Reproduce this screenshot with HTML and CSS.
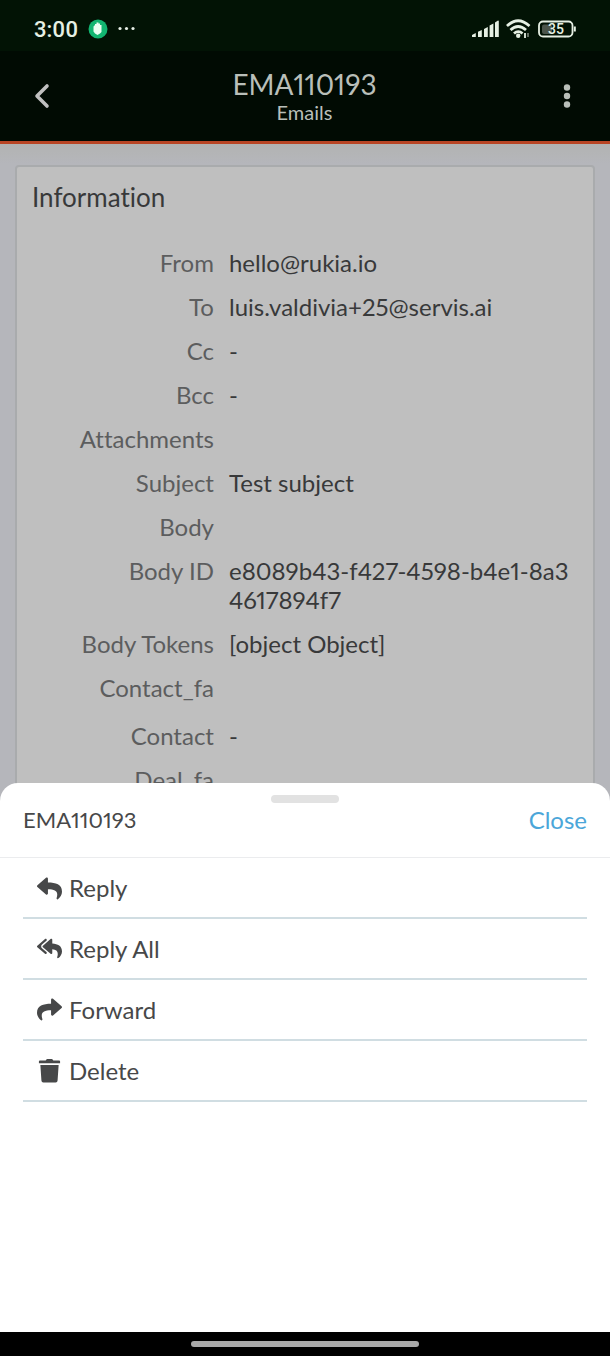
FILE: index.html
```html
<!DOCTYPE html>
<html lang="en">
<head>
    <meta charset="UTF-8">
    <meta name="viewport" content="width=device-width, initial-scale=1.0">
    <title>EMA110193 - Emails</title>
    <link rel="stylesheet" href="styles.css">
</head>
<body>
    <div class="screen">
        <div class="status-bar">
            <div class="status-left">
                <span class="time">3:00</span>
                <svg class="app-badge" width="20" height="20" viewBox="0 0 20 20">
                    <circle cx="10" cy="10" r="9.5" fill="#12b571"/>
                    <path d="M5.500 7.500 7 6V5h1.500V3.500h2V4.500H12V6h1.500v7L12 14.500 9.500 16 7 14.500 5.500 12.500Z" fill="#e9fff2"/>
                </svg>
                <svg width="18" height="6" viewBox="0 0 18 6" fill="#e6eee6">
                    <circle cx="2" cy="2.500" r="1.600"/>
                    <circle cx="8.500" cy="2.500" r="1.600"/>
                    <circle cx="15" cy="2.500" r="1.600"/>
                </svg>
            </div>
            <div class="status-right">
                <svg width="28" height="20" viewBox="0 0 28 20" fill="#e6f0e4">
                    <path d="M0 16 3.800 14v4H.5Q0 18 0 17.500ZM6 12.700 9.800 11v7H6ZM12 10 15.800 8v10H12ZM17.600 6.500l3.800-2V18h-3.800ZM23 3.500 26 1.500Q26.800 1.500 26.800 2v16H23Z"/>
                </svg>
                <svg width="26" height="20" viewBox="0 0 26 20" fill="none" stroke="#e6f0e4" stroke-width="2.800">
                    <path d="M1 7Q12-3.500 23.500 7"/>
                    <path d="M4.500 11q7.500-7 15.500 0"/>
                    <path d="M8 14.500q4.300-3.800 8.500 0"/>
                    <circle cx="12.200" cy="16.800" r="2.200" fill="#e6f0e4" stroke="none"/>
                    <path d="M19 14v5" stroke-width="1.800"/>
                    <path d="M22 14v4" stroke="#7c877c" stroke-width="1.600"/>
                </svg>
                <svg width="38" height="18" viewBox="0 0 38 18">
                    <rect x="1" y="1.500" width="33.500" height="15" rx="4" fill="none" stroke="#e6f0e4" stroke-width="1.800"/>
                    <path d="M35.800 6.500h2v5h-2z" fill="#e6f0e4"/>
                    <rect x="4" y="4.500" width="10" height="9.500" rx="2" fill="#4b554b"/>
                    <text x="18" y="14" text-anchor="middle" class="battery-text">35</text>
                </svg>
            </div>
        </div>

        <header class="header">
            <button class="icon-button" aria-label="Back">
                <svg width="16" height="26" viewBox="0 0 16 26" fill="none" stroke="#c0c0c0" stroke-width="3.600" stroke-linecap="round" stroke-linejoin="round">
                    <path d="M13 3 3 13l10 10"/>
                </svg>
            </button>
            <div class="heading">
                <h1>EMA110193</h1>
                <p>Emails</p>
            </div>
            <button class="icon-button" aria-label="More options">
                <svg width="8" height="26" viewBox="0 0 8 26" fill="#b9bfb9">
                    <circle cx="4" cy="4.500" r="3.200"/>
                    <circle cx="4" cy="13" r="3.200"/>
                    <circle cx="4" cy="21.500" r="3.200"/>
                </svg>
            </button>
        </header>

        <main class="content">
            <section class="card">
                <h2>Information</h2>
                <dl class="fields">
                    <div class="field"><dt>From</dt><dd>hello@rukia.io</dd></div>
                    <div class="field"><dt>To</dt><dd>luis.valdivia+25@servis.ai</dd></div>
                    <div class="field"><dt>Cc</dt><dd>-</dd></div>
                    <div class="field"><dt>Bcc</dt><dd>-</dd></div>
                    <div class="field"><dt>Attachments</dt><dd></dd></div>
                    <div class="field"><dt>Subject</dt><dd>Test subject</dd></div>
                    <div class="field"><dt>Body</dt><dd></dd></div>
                    <div class="field"><dt>Body ID</dt><dd>e8089b43-f427-4598-b4e1-8a34617894f7</dd></div>
                    <div class="field"><dt>Body Tokens</dt><dd>[object Object]</dd></div>
                    <div class="field"><dt>Contact_fa</dt><dd></dd></div>
                    <div class="field linked"><dt>Contact</dt><dd>-</dd></div>
                    <div class="field"><dt>Deal_fa</dt><dd></dd></div>
                </dl>
            </section>
        </main>

        <section class="sheet" role="dialog" aria-label="EMA110193">
            <div class="handle"></div>
            <div class="sheet-header">
                <span class="sheet-title">EMA110193</span>
                <button class="close">Close</button>
            </div>
            <ul class="actions">
                <li>
                    <button class="action">
                        <svg width="25" height="25" viewBox="0 -20 512 512" fill="currentColor">
                            <path d="M8.309 189.836 184.313 37.851C199.719 24.546 224 35.347 224 56.015v80.053c160.629 1.839 288 34.032 288 186.258 0 61.441-39.581 122.309-83.333 154.132-13.653 9.931-33.111-2.533-28.077-18.631 45.344-145.012-21.507-183.510-176.590-185.742V360c0 20.700-24.300 31.453-39.687 18.164l-176.004-152c-11.071-9.562-11.086-26.753 0-36.328z"/>
                        </svg>
                        Reply
                    </button>
                </li>
                <li>
                    <button class="action">
                        <svg width="25" height="25" viewBox="0 0 576 512" fill="currentColor">
                            <path d="M136.309 189.836 312.313 37.851C327.720 24.546 352 35.348 352 56.015v82.763c129.182 10.231 224 52.212 224 183.548 0 61.441-39.582 122.309-83.333 154.132-13.653 9.931-33.111-2.533-28.077-18.631 38.512-123.162-3.922-169.482-112.590-182.015v84.175c0 20.701-24.300 31.453-39.687 18.164L136.309 226.164c-11.071-9.561-11.086-26.753 0-36.328zm-128 36.328L184.313 378.150C199.700 391.439 224 380.687 224 359.986v-15.818l-108.606-93.785A55.960 55.960 0 0 1 96 207.998a55.953 55.953 0 0 1 19.393-42.380L224 71.832V56.015c0-20.667-24.280-31.469-39.687-18.164L8.309 189.836c-11.086 9.575-11.071 26.767 0 36.328z"/>
                        </svg>
                        Reply All
                    </button>
                </li>
                <li>
                    <button class="action">
                        <svg width="25" height="25" viewBox="0 0 512 512" fill="currentColor">
                            <path d="M503.691 189.836 327.687 37.851C312.281 24.546 288 35.347 288 56.015v80.053C127.371 137.907 0 170.100 0 322.326c0 61.441 39.581 122.309 83.333 154.132 13.653 9.931 33.111-2.533 28.077-18.631C66.066 312.814 132.917 274.316 288 272.085V360c0 20.700 24.300 31.453 39.687 18.164l176.004-152c11.071-9.562 11.086-26.753 0-36.328z"/>
                        </svg>
                        Forward
                    </button>
                </li>
                <li>
                    <button class="action">
                        <svg width="25" height="25" viewBox="0 0 26 26" fill="currentColor">
                            <path d="M3 2.500H9l1-1.200Q10.300 1 10.800 1h4.400q.5 0 .8.300l1 1.200h6q1 0 1 1V5.500H2V3.500q0-1 1-1ZM3.500 7.200h19l-1.100 16.300q-.1 2-2 2H6.600q-1.900 0-2-2Z"/>
                        </svg>
                        Delete
                    </button>
                </li>
            </ul>
        </section>
    </div>
    <div class="nav-bar"><span class="home-indicator"></span></div>
</body>
</html>
```
FILE: styles.css
```css
* {
    margin: 0;
    padding: 0;
    box-sizing: border-box;
}

body {
    display: flex;
    flex-direction: column;
    height: 100vh;
    font-family: Lato, "Open Sans", sans-serif;
    font-size: 24px;
    line-height: 29px;
    font-variant-ligatures: none;
    font-variant-numeric: proportional-nums;
    color: #474849;
    background: #000;
}

button {
    border: none;
    background: none;
    font: inherit;
    font-variant-ligatures: none;
    color: inherit;
    cursor: pointer;
}

svg {
    display: block;
    flex-shrink: 0;
}

.screen {
    flex: 1;
    min-height: 0;
    display: flex;
    flex-direction: column;
    position: relative;
    overflow: hidden;
    background: #b5b6bb;
}

/* status bar */
.status-bar {
    display: flex;
    justify-content: space-between;
    align-items: center;
    height: 51px;
    padding: 7px 34px 0;
    background: #021305;
}

.status-left {
    display: flex;
    align-items: center;
    gap: 10px;
}

.status-right {
    display: flex;
    align-items: center;
    gap: 6px;
}

.time {
    font-family: Roboto, sans-serif;
    font-size: 22px;
    font-weight: 500;
    color: #e6f0e4;
}

.battery-text {
    font-family: Roboto, sans-serif;
    font-size: 14px;
    font-weight: 500;
    fill: #e6f0e4;
}

/* header */
.header {
    display: flex;
    justify-content: space-between;
    flex-shrink: 0;
    height: 93px;
    padding: 0 21px 0 20px;
    background: #010b03;
    border-bottom: 3px solid #b94524;
    color: #b9bfb9;
}

.icon-button {
    display: flex;
    align-items: center;
    justify-content: center;
    width: 44px;
}

.heading {
    padding-top: 17px;
    text-align: center;
}

.heading h1 {
    font-size: 28px;
    font-weight: 400;
    line-height: 32px;
}

.heading p {
    font-size: 20px;
    line-height: 24px;
}

/* record */
.content {
    padding: 21px 15px 0;
    background: linear-gradient(#b2b3b2, #b5b6bb 20px);
}

.card {
    padding: 14px 15px;
    background: #bfbfbf;
    border: 2px solid #a9abad;
    border-radius: 4px;
}

.card h2 {
    font-size: 26px;
    font-weight: 400;
    line-height: 32px;
    margin-bottom: 35px;
    color: #38393a;
}

.fields {
    display: flex;
    flex-direction: column;
    gap: 15px;
}

.field {
    display: grid;
    grid-template-columns: 33.33% 1fr;
    column-gap: 15px;
}

.field dt {
    text-align: right;
    color: #5c5d5e;
}

.field dd {
    color: #38393a;
    word-break: break-all;
}

.linked {
    padding-top: 4px;
}

/* bottom sheet */
.sheet {
    position: absolute;
    left: 0;
    right: 0;
    bottom: 0;
    min-height: 549px;
    padding-top: 12px;
    background: #fff;
    border-radius: 18px 18px 0 0;
}

.handle {
    width: 68px;
    height: 8px;
    margin: 0 auto;
    border-radius: 4px;
    background: #e2e2e2;
}

.sheet-header {
    display: flex;
    justify-content: space-between;
    padding: 2px 23px 23px;
    border-bottom: 1px solid #ebecee;
}

.sheet-title {
    font-size: 22px;
}

.close {
    color: #4ba6d9;
}

.actions {
    list-style: none;
    padding: 0 23px;
}

.actions li {
    border-bottom: 2px solid #d0dde2;
}

.action {
    display: flex;
    align-items: center;
    gap: 7px;
    width: 100%;
    height: 59px;
    padding-left: 14px;
}

/* gesture bar */
.nav-bar {
    display: flex;
    align-items: center;
    justify-content: center;
    height: 24px;
}

.home-indicator {
    width: 228px;
    height: 6px;
    border-radius: 3px;
    background: #a8a8a8;
}
```
